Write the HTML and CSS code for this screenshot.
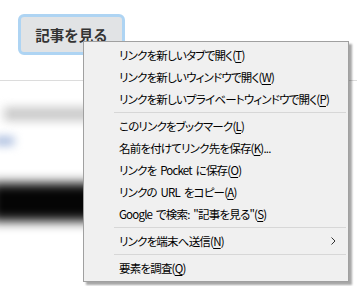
FILE: index.html
```html
<!DOCTYPE html>
<html lang="ja">
<head>
    <meta charset="UTF-8">
    <meta name="viewport" content="width=device-width, initial-scale=1.0">
    <title>記事を見る</title>
    <link rel="stylesheet" href="styles.css">
</head>
<body>

    <div class="page">
        <div class="top">
            <button class="btn">記事を見る</button>
        </div>
        <div class="rule"></div>
        <div class="blurred">
            <div class="blur-text"></div>
            <div class="blur-link"></div>
            <div class="blur-bar"></div>
        </div>
    </div>

    <ul class="menu">
        <li class="item">リンクを新しいタブで開く(<u>T</u>)</li>
        <li class="item">リンクを新しいウィンドウで開く(<u>W</u>)</li>
        <li class="item">リンクを新しいプライベートウィンドウで開く(<u>P</u>)</li>
        <li class="sep"></li>
        <li class="item">このリンクをブックマーク(<u>L</u>)</li>
        <li class="item">名前を付けてリンク先を保存(<u>K</u>)...</li>
        <li class="item">リンクを Pocket に保存(<u>O</u>)</li>
        <li class="item">リンクの URL をコピー(<u>A</u>)</li>
        <li class="item">Google で検索: "記事を見る"(<u>S</u>)</li>
        <li class="sep"></li>
        <li class="item sub">リンクを端末へ送信(<u>N</u>)
            <svg class="arrow" width="5" height="8" viewBox="0 0 5 8"><path d="M0.5 0.5 L4 4 L0.5 7.5" fill="none" stroke="#333" stroke-width="1"/></svg>
        </li>
        <li class="sep"></li>
        <li class="item">要素を調査(<u>Q</u>)</li>
    </ul>

</body>
</html>
```

FILE: styles.css
```css
body {
    margin: 0;
    background: #fff;
    font-family: "Noto Sans CJK JP", "Noto Sans", sans-serif;
    overflow: hidden;
}
.page { height: 286px; overflow: hidden; }
.top { padding: 14px 0 0 18px; height: 52px; box-sizing: border-box; }
.btn {
    width: 107px;
    height: 41px;
    border: 3px solid #aed4f3;
    border-radius: 6px;
    background: #e1e3e5;
    color: #333;
    font-family: inherit;
    font-size: 14.5px;
    font-weight: bold;
    padding: 0 0 1px;
}
.rule { margin-top: 28px; height: 1px; background: #dcdcdc; }
.blurred { position: relative; height: 200px; }
.blur-text {
    margin: 26px 0 0 4px;
    width: 90px;
    height: 14px;
    background: #cbcbcb;
    filter: blur(5px);
}
.blur-link {
    margin: 16px 0 0 -6px;
    width: 20px;
    height: 8px;
    background: #9fb4da;
    filter: blur(5px);
}
.blur-bar {
    margin: 38px 0 0 -10px;
    width: 110px;
    height: 38px;
    background: #050505;
    filter: blur(6px);
}

.menu {
    position: absolute;
    left: 83px;
    top: 41px;
    width: 266px;
    margin: 0;
    padding: 2px 0;
    list-style: none;
    box-sizing: border-box;
    background: #f0f0f0;
    border: 1px solid #a0a0a0;
    box-shadow: 3px 3px 2px rgba(0, 0, 0, 0.35);
    font-size: 11.5px;
    letter-spacing: -0.8px;
    word-spacing: 2px;
    font-feature-settings: "palt";
    color: #000;
}
.item {
    height: 22px;
    line-height: 22px;
    padding-left: 35px;
    white-space: nowrap;
}
.item u { text-underline-offset: 2px; }
.sub { display: flex; align-items: center; }
.arrow { margin-left: auto; margin-right: 12px; }
.sep {
    height: 1px;
    margin: 2px 2px 2px 30px;
    background: #d7d7d7;
}
```
